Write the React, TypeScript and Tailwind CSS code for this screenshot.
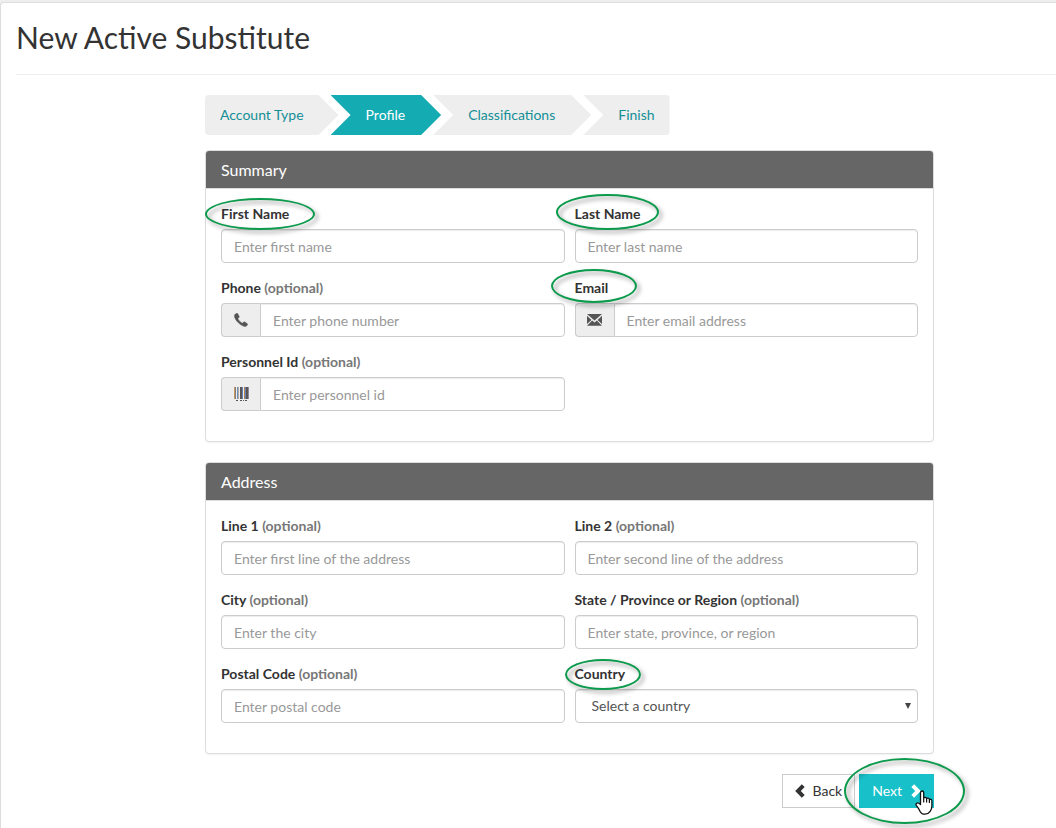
import React, { useId } from "react";

function PhoneIcon() {
  return (
    <svg width="14" height="14" viewBox="0 0 14 14" fill="currentColor" stroke="currentColor" strokeWidth="0.5" strokeLinejoin="round" aria-hidden="true">
      <path d="M2.9.3C2 .4.7 1.3.5 2.4c-.3 2 1.4 4.900 3.700 7.200s5 4 7.100 3.900c1-.1 2-1.100 2.300-1.900.1-.4 0-.7-.3-.9l-2.500-1.700c-.4-.2-.8-.2-1.100.1l-.9.9c-.2.200-.5.2-.8.1C6.400 9.200 4.800 7.500 4 6c-.1-.3-.1-.5.100-.7L5 4.400c.300-.3.300-.7.1-1.100L3.600.6C3.400.4 3.200.3 2.900.3z" />
    </svg>
  );
}

function EnvelopeIcon() {
  return (
    <svg width="15" height="12" viewBox="0 0 15 12" fill="currentColor" aria-hidden="true">
      <path d="M0 0h15L7.500 6.500z" />
      <path d="M0 1.800 4.500 5.900 0 10z" />
      <path d="M15 1.800 10.500 5.900 15 10z" />
      <path d="M0 11.800 5.200 6.600l2.300 2 2.300-2L15 11.800z" />
    </svg>
  );
}

function BarcodeIcon() {
  return (
    <svg width="15" height="14" viewBox="0 0 15 14" shapeRendering="crispEdges" aria-hidden="true">
      <path fill="#c79a5c" d="M0 0h1v12H0z" />
      <path fill="#7d7d86" d="M1 0h1v12H1z" />
      <path fill="#6c8fb8" d="M3 0h1v12H3z" />
      <path fill="#b9a9a0" d="M4 0h1v12H4z" />
      <path fill="#5c5558" d="M6 0h2v12H6zM12 0h2v12h-2z" />
      <path fill="#5d83b8" d="M8 0h1v12H8zM11 0h1v12h-1z" />
      <path fill="#b87e50" d="M10 0h1v12h-1z" />
      <path fill="#8b8b9c" d="M14 0h1v12h-1z" />
      <path fill="#555" d="M2 13h2v1H2zM6 13h2v1H6zM9 13h1v1H9zM11 13h2v1h-2z" />
    </svg>
  );
}

function Chevron({ flip = false }: { flip?: boolean }) {
  return (
    <svg width="10" height="14" viewBox="0 0 10 14" fill="currentColor" className={flip ? "rotate-180" : ""} aria-hidden="true">
      <path d="M6.800.2 9.700 3.100 5.800 7l3.900 3.900-2.900 2.900L.2 7z" />
    </svg>
  );
}

function HandPointer() {
  return (
    <svg width="18" height="25" viewBox="0 0 18 25" className="pointer-events-none absolute top-4 left-14 z-20" aria-hidden="true">
      <path
        d="M5.500 14.500V2.700c0-2.300 3.200-2.300 3.200 0V8c.3-1 2.700-.9 2.900.6.600-.8 2.500-.6 2.800.9.800-.6 2.500-.1 2.500 1.400v5c0 3-.9 4.200-2 5.800-1.300 2-3 2.500-4.900 2.500-2.500 0-4.200-1-5.200-3.300-.9-2-2.200-3.500-3.500-5.500-1.100-1.900 1.300-3.300 2.600-2.100z"
        fill="#fff"
        stroke="#111"
        strokeWidth="1.300"
        strokeLinejoin="round"
      />
      <path d="M8.700 8v4.500M11.600 9v3.500M14.400 10v3" stroke="#111" strokeWidth="1.200" fill="none" />
    </svg>
  );
}

const ring =
  "pointer-events-none absolute z-10 rounded-[50%] border-2 border-[#0c9a4c] drop-shadow-[3px_3px_2px_rgba(0,0,0,0.4)]";

const control =
  "h-[34px] w-full min-w-0 border border-[#ccc] bg-white px-3 text-sm text-[#555] shadow-[inset_0_1px_1px_rgba(0,0,0,0.075)] outline-none placeholder:text-[#999] placeholder:opacity-100 focus:border-[#14abb3]";

type FieldProps = {
  label: string;
  placeholder?: string;
  optional?: boolean;
  icon?: React.ReactNode;
  type?: string;
  ringClass?: string;
  children?: (id: string) => React.ReactNode;
};

function Field({ label, placeholder, optional, icon, type = "text", ringClass, children }: FieldProps) {
  const id = useId();
  return (
    <div className="mb-[15px] min-w-0">
      <div className="relative mb-[5px] h-5">
        <label htmlFor={id} className="block text-sm font-bold text-[#333]">
          {label}
          {optional && <span className="text-[#777]"> (optional)</span>}
        </label>
        {ringClass && <span className={`${ring} ${ringClass}`} />}
      </div>
      {children ? (
        children(id)
      ) : (
        <div className="flex">
          {icon && (
            <span className="flex w-[39px] shrink-0 items-center justify-center rounded-l border border-r-0 border-[#ccc] bg-[#eee] text-[#555]">
              {icon}
            </span>
          )}
          <input id={id} type={type} placeholder={placeholder} className={`${control} ${icon ? "rounded-r" : "rounded"}`} />
        </div>
      )}
    </div>
  );
}

function Panel({ title, children }: { title: string; children: React.ReactNode }) {
  return (
    <section className="mb-5 rounded border border-[#ddd] bg-white shadow-[0_1px_1px_rgba(0,0,0,0.05)]">
      <h2 className="flex h-[38px] items-center rounded-t-[3px] border-b border-[#ddd] bg-[#666] px-[15px] text-base text-white">
        {title}
      </h2>
      <div className="grid grid-cols-2 gap-x-[10px] p-[15px]">{children}</div>
    </section>
  );
}

export default function App() {
  return (
    <div className="min-h-screen overflow-x-hidden bg-[#eee] pt-[2px] font-['Lato',sans-serif] text-sm leading-5 text-[#333]">
      <main className="min-h-screen rounded-tl border-t border-l border-[#ddd] bg-white pb-5 pl-[15px]">
        <header className="border-b border-[#eee] pt-[18px] pb-5">
          <h1 className="text-[30px] leading-[33px]">New Active Substitute</h1>
        </header>

        <form className="mt-5 ml-[189px] max-w-[729px]" onSubmit={(e) => e.preventDefault()}>
          <nav className="mb-[15px] flex h-10 leading-10 text-[#148f96]" aria-label="Steps">
            <a href="#account" className="rounded-l bg-[#eee] pr-[35px] pl-[15px] [clip-path:polygon(0_0,calc(100%-20px)_0,100%_50%,calc(100%-20px)_100%,0_100%)]">
              Account Type
            </a>
            <a href="#profile" aria-current="step" className="-ml-2 bg-[#14abb3] pr-9 pl-[35px] text-white [clip-path:polygon(0_0,calc(100%-20px)_0,100%_50%,calc(100%-20px)_100%,0_100%,20px_50%)]">
              Profile
            </a>
            <a href="#classifications" className="-ml-2 bg-[#eee] pr-9 pl-[35px] [clip-path:polygon(0_0,calc(100%-20px)_0,100%_50%,calc(100%-20px)_100%,0_100%,20px_50%)]">
              Classifications
            </a>
            <a href="#finish" className="-ml-2 rounded-r bg-[#eee] pr-[15px] pl-[35px] [clip-path:polygon(0_0,100%_0,100%_100%,0_100%,20px_50%)]">
              Finish
            </a>
          </nav>

          <Panel title="Summary">
            <Field label="First Name" placeholder="Enter first name" ringClass="-top-[6px] -left-4 h-8 w-[110px]" />
            <Field label="Last Name" placeholder="Enter last name" ringClass="-top-[10px] -left-[19px] h-9 w-[103px]" />
            <Field label="Phone" optional type="tel" placeholder="Enter phone number" icon={<PhoneIcon />} />
            <Field label="Email" type="email" placeholder="Enter email address" icon={<EnvelopeIcon />} ringClass="-top-[9px] -left-6 h-[34px] w-[86px]" />
            <Field label="Personnel Id" optional placeholder="Enter personnel id" icon={<BarcodeIcon />} />
          </Panel>

          <Panel title="Address">
            <Field label="Line 1" optional placeholder="Enter first line of the address" />
            <Field label="Line 2" optional placeholder="Enter second line of the address" />
            <Field label="City" optional placeholder="Enter the city" />
            <Field label="State / Province or Region" optional placeholder="Enter state, province, or region" />
            <Field label="Postal Code" optional placeholder="Enter postal code" />
            <Field label="Country" ringClass="-top-[5px] -left-[10px] h-[31px] w-[76px]">
              {(id) => (
                <div className="relative">
                  <select id={id} className={`${control} appearance-none rounded pl-4`}>
                    <option>Select a country</option>
                  </select>
                  <svg width="6" height="6" viewBox="0 0 6 6" fill="#444" className="pointer-events-none absolute top-[14px] right-[7px]" aria-hidden="true">
                    <path d="M0 0h6L3 6z" />
                  </svg>
                </div>
              )}
            </Field>
          </Panel>

          <div className="flex justify-end gap-1">
            <button type="button" className="flex h-[34px] items-center gap-2 border border-[#ccc] bg-white px-3">
              <Chevron />
              Back
            </button>
            <div className="relative">
              <button type="submit" className="flex h-[34px] items-center gap-[9px] bg-[#18c1c9] px-[13px] text-white">
                Next
                <Chevron flip />
              </button>
              <span className={`${ring} -top-4 -left-[15px] h-[66px] w-[121px]`} />
              <HandPointer />
            </div>
          </div>
        </form>
      </main>
    </div>
  );
}
